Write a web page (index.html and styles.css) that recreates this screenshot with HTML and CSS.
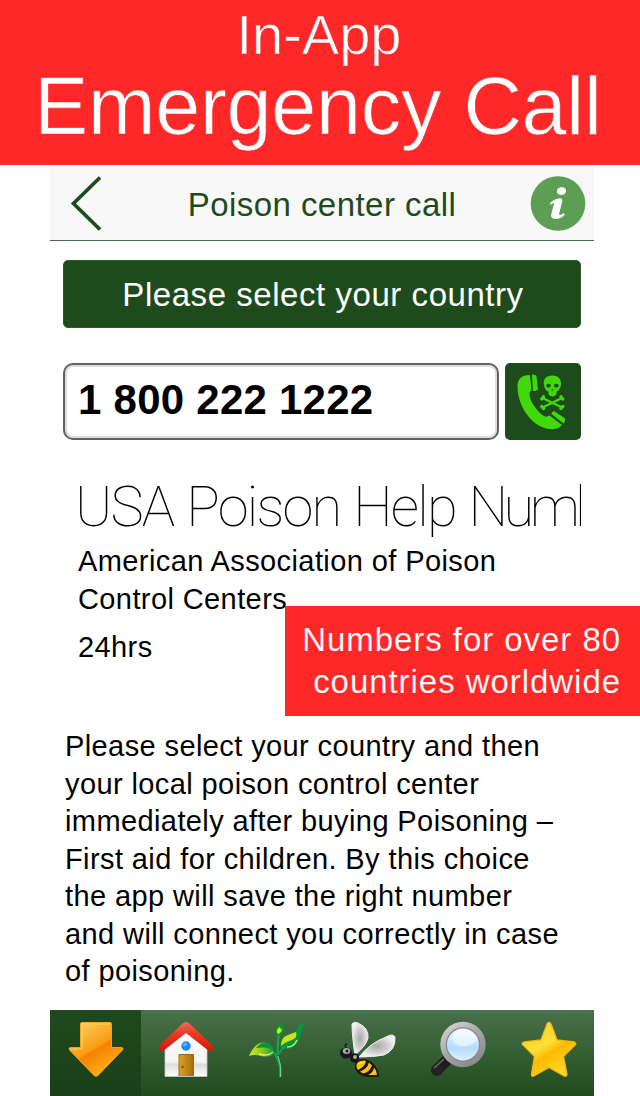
FILE: index.html
```html
<!DOCTYPE html>
<html lang="en">
<head>
<meta charset="utf-8">
<title>Poison center call</title>
<link rel="stylesheet" href="styles.css">
</head>
<body>
<header class="banner">
  <div class="banner-small">In-App</div>
  <div class="banner-big">Emergency Call</div>
</header>
<main class="phone">
  <nav class="navbar">
    <svg class="back" width="32" height="56" viewBox="0 0 32 56"><path d="M30 1.500L3.500 27.500l26.500 26" fill="none" stroke="#1e4b1c" stroke-width="3.700"/></svg>
    <h1 class="title">Poison center call</h1>
    <svg class="info" width="56" height="56" viewBox="0 0 56 56"><circle cx="28" cy="27.500" r="27.300" fill="#5d9e55"/><ellipse cx="31.500" cy="15" rx="4.600" ry="4" fill="#fff" transform="rotate(-15 31.500 15)"/><path d="M19.800 27.500q4-4.500 9-5.100 4.200-.5 3.400 3L29.300 37q-.7 2.800 1.300 1.900l3.200-1.700.8 1.500q-4 4.300-9.500 4.300-5-.3-3.800-5l2.600-10q.7-2.500-3.300.8Z" fill="#fff"/></svg>
  </nav>
  <button class="country">Please select your country</button>
  <div class="call-row">
    <div class="number">1 800 222 1222</div>
    <div class="dial">
      <svg width="76" height="76" viewBox="0 0 76 76">
        <g fill="#42d90b">
          <path d="M25 12C18 12 13 15 12.500 22C12 40 23 58 37 64C45 67.500 53 67 57 62L44.500 52.500C41 55 38 53 35 50C29 44 24.500 36 24.500 31C24.500 29 25 28 26.500 27.500Z"/>
          <path d="M27 11.500Q30.500 11 31.500 13.500L33 26Q32 28 28 28Z"/>
          <path d="M46.500 51Q47 48.500 49 48L59.500 55Q61 57 58.500 60.500Z"/>
          <path d="M47.300 12.500C41 12.500 38.500 16 38.800 21Q39 24 40.500 26Q41 28 43.500 28.500V31.500Q47.500 35.500 51.500 31.500V28.500Q54 28 54.200 26Q56 24 56 21C56 16 53.500 12.500 47.300 12.500Z"/>
        </g>
        <g stroke="#42d90b" stroke-width="2.500" stroke-linecap="round"><path d="M37.500 35l19.500 9.500M57 35l-19.500 9.500"/></g>
        <g fill="#42d90b"><circle cx="36.700" cy="36" r="1.700"/><circle cx="38.500" cy="33.800" r="1.700"/><circle cx="57.800" cy="36" r="1.700"/><circle cx="56" cy="33.800" r="1.700"/><circle cx="36.700" cy="43.500" r="1.700"/><circle cx="38.500" cy="45.500" r="1.700"/><circle cx="57.800" cy="43.500" r="1.700"/><circle cx="56" cy="45.500" r="1.700"/></g>
        <g fill="#1e4b1c"><ellipse cx="43.500" cy="22.700" rx="2.300" ry="1.900"/><ellipse cx="51.300" cy="22.700" rx="2.300" ry="1.900"/><path d="M47.400 25.500l1.200 2h-2.400z"/></g>
      </svg>
    </div>
  </div>
  <section class="details">
    <h2 class="name">USA Poison Help <span class="tight">Number</span></h2>
    <p class="org">American Association of Poison<br>Control Centers</p>
    <p class="hours">24hrs</p>
  </section>
  <p class="help">Please select your country and then<br>your local poison control center<br>immediately after buying Poisoning –<br>First aid for children. By this choice<br>the app will save the right number<br>and will connect you correctly in case<br>of poisoning.</p>
  <nav class="tabs">
    <div class="tab active">
      <svg width="56" height="56" viewBox="0 0 56 56">
        <defs><linearGradient id="arrow" x1="0" y1="0" x2=".6" y2="1"><stop offset="0" stop-color="#ffd66a"/><stop offset=".55" stop-color="#fb9d15"/><stop offset=".6" stop-color="#f58200"/><stop offset="1" stop-color="#ffb21c"/></linearGradient></defs>
        <path d="M14 1.500H42Q43.500 1.500 43.500 3V26.500H53.500Q56 27 54.500 29L30 54.500Q28 56 26 54.500L1.500 29Q0 27 2.500 26.500H12.500V3Q12.500 1.500 14 1.500Z" fill="url(#arrow)" stroke="#f6a31d"/>
        <path d="M2.500 28H14V3H42" fill="none" stroke="#ffdf7c" opacity=".7"/>
      </svg>
    </div>
    <div class="tab">
      <svg width="56" height="56" viewBox="0 0 56 56">
        <defs>
          <linearGradient id="wall" x2="0" y2="1"><stop offset="0" stop-color="#fff"/><stop offset=".7" stop-color="#f4f4f4"/><stop offset=".75" stop-color="#ddd"/><stop offset="1" stop-color="#fff"/></linearGradient>
          <linearGradient id="roof" x2="0" y2="1"><stop offset="0" stop-color="#f4685a"/><stop offset=".4" stop-color="#e93a26"/><stop offset="1" stop-color="#d91608"/></linearGradient>
          <linearGradient id="door"><stop offset="0" stop-color="#dda329"/><stop offset="1" stop-color="#a96b00"/></linearGradient>
        </defs>
        <path d="M7 24L28 7l21 17V55.500H7Z" fill="url(#wall)" stroke="#c3c8c3" stroke-width=".8"/>
        <path d="M28 1Q30 1 32 3L54 24Q56 26 55 28.500Q52 31.500 49 28.500L28 12L7 28.500Q4 31.500 1 28.500Q0 26 2 24L24 3Q26 1 28 1Z" fill="url(#roof)"/>
        <circle cx="28" cy="25" r="4.700" fill="#168af5"/><circle cx="27" cy="23.500" r="2" fill="#58b5ff"/>
        <path d="M21 55V33.500H35.500V55" fill="url(#door)" stroke="#9c6b0c"/><circle cx="24.500" cy="46" r="1.200" fill="#7d5000"/>
      </svg>
    </div>
    <div class="tab">
      <svg width="56" height="56" viewBox="0 0 56 56">
        <defs><linearGradient id="leafA"><stop offset="0" stop-color="#d5e619"/><stop offset=".55" stop-color="#86c51d"/><stop offset="1" stop-color="#079638"/></linearGradient></defs>
        <path d="M31 56Q32 48 30 42Q28 35 25 31M29 34Q28 24 30 13" fill="none" stroke="#13a64a" stroke-width="2.300"/>
        <path d="M31.500 56Q33 45 29 35" fill="none" stroke="#6fd692" stroke-width="1"/>
        <path d="M0 35Q6 21 15 21.500Q24 22 26 32Q21 37 12 35Q5 33 0 35Z" fill="url(#leafA)"/>
        <path d="M7 27Q12 21 18 22Q25 24 26 32Q22 25 7 27Z" fill="#079638"/><path d="M10 33Q18 36 24 31" stroke="#f3ffbd" fill="none"/>
        <path d="M55 1Q54 7 51 15Q49 27 39 28Q33 28 31 25Q32 15 41 13Q48 11 49 6Q51 2 55 1Z" fill="#079638"/>
        <path d="M47 11Q49 16 43 19Q36 21 32 25Q32 16 39 14Z" fill="#cbe31d"/><path d="M38 26Q45 26 48 19" stroke="#bdeb75" fill="none" stroke-width="1.500"/>
        <path d="M35 1Q25 5 27 11Q27 14 31 15Q36 11 34 6Z" fill="#079638"/><path d="M31 6Q26 9 29 13Q32 12 34 7Q32 11 31 6Z" fill="#d1e91c"/>
        <path d="M30 33Q32 28 36 26" stroke="#13a64a" stroke-width="1.500" fill="none"/>
      </svg>
    </div>
    <div class="tab">
      <svg width="56" height="56" viewBox="0 0 56 56">
        <defs><radialGradient id="wing"><stop offset="0" stop-color="#aaa"/><stop offset=".55" stop-color="#ccc"/><stop offset="1" stop-color="#f0f0f0"/></radialGradient></defs>
        <path d="M15 34Q12 15 12 3Q14 0 18 2Q29 7 28 17Q26 25 15 34Z" fill="url(#wing)" stroke="#eee"/>
        <path d="M19 36Q30 22 46 16Q53 12 55 16Q56 29 44 34Q34 36 19 36Z" fill="url(#wing)" stroke="#eee"/>
        <path d="M7 28Q3 24 7 23" fill="none" stroke="#171717" stroke-width="1.300"/>
        <ellipse cx="6" cy="32" rx="6" ry="5.500" fill="#171717"/><ellipse cx="6.500" cy="30" rx="3.800" ry="3" fill="#aaa"/><circle cx="7" cy="30" r="1.500" fill="#222"/>
        <circle cx="14.500" cy="37" r="4.700" fill="#171717"/><circle cx="15" cy="36" r="2" fill="#aaa"/>
        <path d="M15 47Q14 39 23 38Q36 39 39.500 55.500Q18 58 15 47Z" fill="#1b1710"/>
        <path d="M16.500 46Q16 41 21 40Q24 39 26 40Q25 46 17.800 49ZM29 41.500L32 44.500Q29 52 23 52.500L20 50.500Q27 48 29 41.500ZM34 46.500Q37 50 37 54L28 54Q33 52 34 46.500Z" fill="#fec20c"/><path d="M19 43q2-2 4-1" stroke="#fff09a" fill="none"/>
      </svg>
    </div>
    <div class="tab">
      <svg width="56" height="56" viewBox="0 0 56 56">
        <defs>
          <linearGradient id="rim" x2=".7" y2="1"><stop offset="0" stop-color="#ddd"/><stop offset=".5" stop-color="#aaa"/><stop offset="1" stop-color="#888"/></linearGradient>
          <linearGradient id="glass" x2="0" y2="1"><stop offset="0" stop-color="#edf8ff"/><stop offset=".6" stop-color="#b4dcff"/><stop offset="1" stop-color="#d9f0ff"/></linearGradient>
        </defs>
        <path d="M18 38L6.500 49.500" stroke="#1c1c1c" stroke-width="11"/><circle cx="7" cy="49" r="6" fill="#222"/><path d="M4 47L14 38" stroke="#5a5a5a" stroke-width="2"/>
        <circle cx="33" cy="23.500" r="22.700" fill="url(#rim)"/><circle cx="33" cy="23.500" r="17.200" fill="#888"/><circle cx="33" cy="23.500" r="16" fill="url(#glass)"/>
        <path d="M22 17Q25 8 33 8Q43 8 48 19Q34 30 24 22Z" fill="#fff" opacity=".55"/>
      </svg>
    </div>
    <div class="tab">
      <svg width="56" height="56" viewBox="0 0 56 56">
        <defs><linearGradient id="star" x1="0" y1="0" x2=".6" y2="1"><stop offset="0" stop-color="#ffd52a"/><stop offset=".5" stop-color="#ffde36"/><stop offset=".65" stop-color="#ffb900"/><stop offset="1" stop-color="#ffd927"/></linearGradient></defs>
        <path d="M28 1.500Q29.500 1.500 30 3L36 19L53 21Q56 22 54 24L42.500 35.500L46 53Q46 56 43 55L28 46.500L13 55Q10 56 10.500 53L13.500 35.500L2 24Q0 22 3 21L20 19L26 3Q26.500 1.500 28 1.500Z" fill="url(#star)" stroke="#f8b514" stroke-width="1.300"/>
      </svg>
    </div>
  </nav>
</main>
<aside class="note">Numbers for over 80<br>countries worldwide</aside>
</body>
</html>
```
FILE: styles.css
```css
* { box-sizing: border-box; margin: 0; padding: 0; }
body { width: 640px; height: 1096px; position: relative; overflow: hidden; background: #fff; color: #000; font-family: "Liberation Sans", Arial, sans-serif; }
svg { display: block; flex: none; }
.banner { height: 165px; background: #ff2828; color: #fff; text-align: center; -webkit-text-stroke: .7px #ff2828; }
.banner-small { font-size: 56px; line-height: 69px; padding-right: 2px; }
.banner-big { font-size: 81px; line-height: 75px; letter-spacing: -.3px; padding-right: 4px; }
.phone { width: 544px; height: 931px; margin-left: 50px; padding-top: 2px; display: flex; flex-direction: column; }
.navbar { height: 74px; flex: none; background: #f8f8f8; border-bottom: 1px solid #47704a; display: flex; align-items: center; padding: 0 8px 0 20px; }
.title { flex: 1; text-align: center; color: #1e4b1c; font-size: 33px; font-weight: 400; letter-spacing: .45px; line-height: 70px; padding-left: 12px; padding-top: 3px; }
.country { height: 68px; margin: 19px 13px 0; flex: none; background: #1e4b1c; border: 1px solid #2e5a2c; border-radius: 5px; color: #fff; font: 33px "Liberation Sans", Arial, sans-serif; letter-spacing: .55px; padding-top: 1px; padding-left: 2px; }
.call-row { display: flex; gap: 6px; margin: 35px 13px 0; height: 77px; flex: none; }
.number { width: 436px; border: 2px solid #626262; border-radius: 10px; box-shadow: inset 0 0 0 2px #ddd; font-size: 42px; line-height: 70px; font-weight: 700; letter-spacing: .25px; padding-left: 13px; }
.dial { width: 76px; background: #1e4b1c; border-radius: 5px; }
.details { margin: 36px 13px 0 25px; height: 214px; flex: none; }
.name { font-family: Roboto, "Liberation Sans", sans-serif; font-size: 56px; font-weight: 100; letter-spacing: -1.8px; word-spacing: 1.2px; line-height: 62px; height: 62px; white-space: nowrap; overflow: hidden; }
.tight { letter-spacing: -4.6px; }
.org, .hours, .help { font-size: 29px; line-height: 37.5px; letter-spacing: .4px; }
.org, .hours { padding-left: 3px; }
.org { padding-top: 5px; }
.hours { padding-top: 11px; }
.help { margin-left: 15px; margin-top: 38px; height: 282px; flex: none; white-space: nowrap; }
.tabs { margin-top: auto; height: 86px; flex: none; display: grid; grid-template-columns: repeat(6, 1fr); background: linear-gradient(#4a714a, #1f4b1d); }
.tab { display: flex; justify-content: center; padding-top: 11px; padding-left: 1px; }
.active { background: linear-gradient(#1f4a1d, #1a3f19); }
.note { position: absolute; left: 285px; top: 606px; width: 355px; height: 110px; padding: 13px 19px 0 0; background: #ff2828; color: #fff; text-align: right; font-size: 33px; line-height: 42px; letter-spacing: .95px; -webkit-text-stroke: .15px #ff2828; }
```
